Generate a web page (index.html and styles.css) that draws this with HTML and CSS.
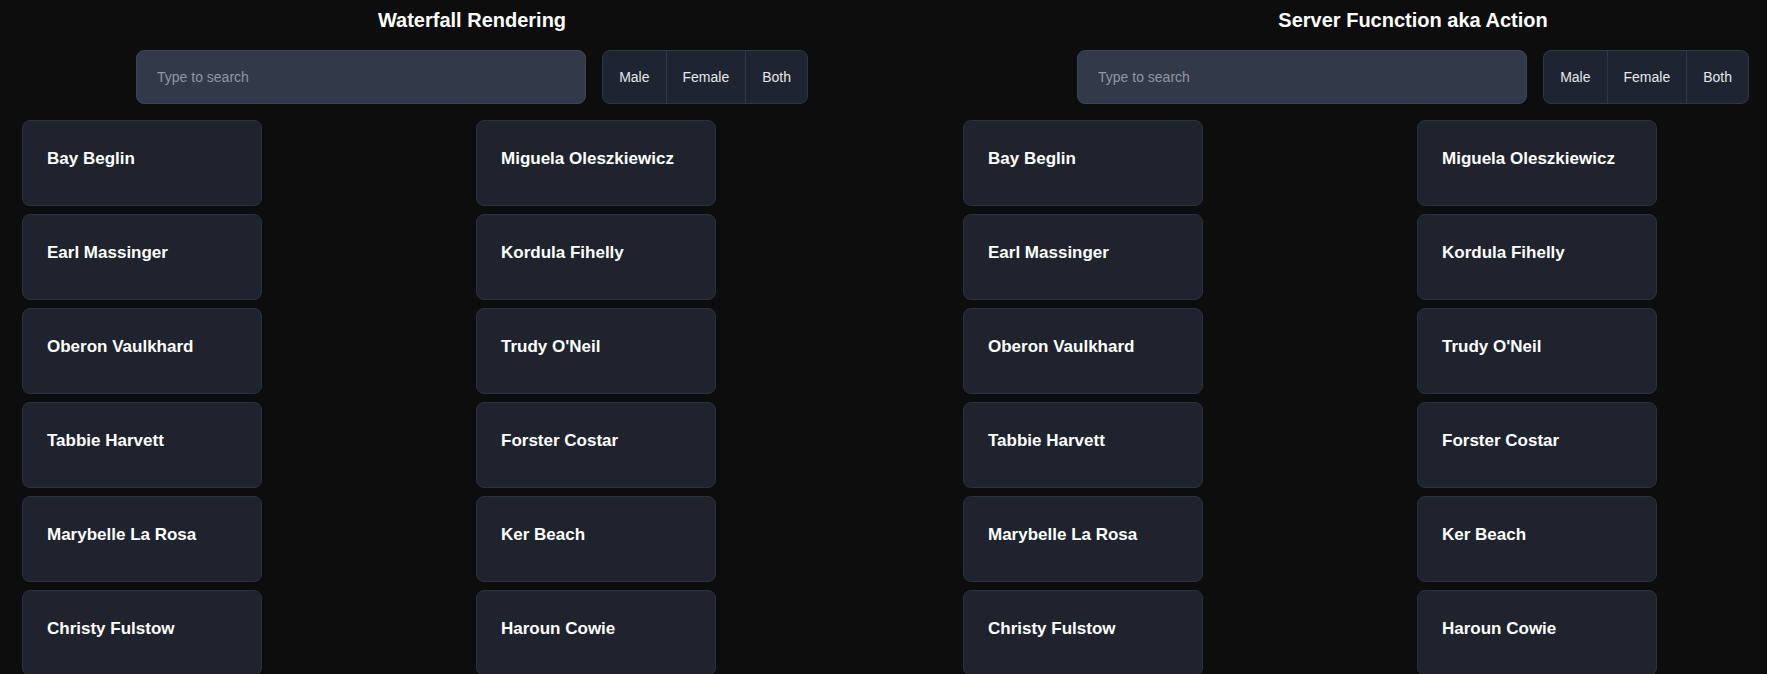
FILE: index.html
```html
<!DOCTYPE html>
<html lang="en">
<head>
<meta charset="utf-8">
<title>Waterfall vs Server Function</title>
<link rel="stylesheet" href="styles.css">
</head>
<body>
<main class="page">
  <section class="panel">
    <header class="panel-head">
      <h1 class="panel-title">Waterfall Rendering</h1>
      <div class="controls">
        <input class="search" type="text" placeholder="Type to search">
        <div class="filter">
          <button class="filter-btn" type="button">Male</button>
          <button class="filter-btn" type="button">Female</button>
          <button class="filter-btn" type="button">Both</button>
        </div>
      </div>
    </header>
    <div class="cards">
      <div class="card"><h2 class="card-name">Bay Beglin</h2></div>
      <div class="card"><h2 class="card-name">Miguela Oleszkiewicz</h2></div>
      <div class="card"><h2 class="card-name">Earl Massinger</h2></div>
      <div class="card"><h2 class="card-name">Kordula Fihelly</h2></div>
      <div class="card"><h2 class="card-name">Oberon Vaulkhard</h2></div>
      <div class="card"><h2 class="card-name">Trudy O'Neil</h2></div>
      <div class="card"><h2 class="card-name">Tabbie Harvett</h2></div>
      <div class="card"><h2 class="card-name">Forster Costar</h2></div>
      <div class="card"><h2 class="card-name">Marybelle La Rosa</h2></div>
      <div class="card"><h2 class="card-name">Ker Beach</h2></div>
      <div class="card"><h2 class="card-name">Christy Fulstow</h2></div>
      <div class="card"><h2 class="card-name">Haroun Cowie</h2></div>
    </div>
  </section>
  <section class="panel">
    <header class="panel-head">
      <h1 class="panel-title">Server Fucnction aka Action</h1>
      <div class="controls">
        <input class="search" type="text" placeholder="Type to search">
        <div class="filter">
          <button class="filter-btn" type="button">Male</button>
          <button class="filter-btn" type="button">Female</button>
          <button class="filter-btn" type="button">Both</button>
        </div>
      </div>
    </header>
    <div class="cards">
      <div class="card"><h2 class="card-name">Bay Beglin</h2></div>
      <div class="card"><h2 class="card-name">Miguela Oleszkiewicz</h2></div>
      <div class="card"><h2 class="card-name">Earl Massinger</h2></div>
      <div class="card"><h2 class="card-name">Kordula Fihelly</h2></div>
      <div class="card"><h2 class="card-name">Oberon Vaulkhard</h2></div>
      <div class="card"><h2 class="card-name">Trudy O'Neil</h2></div>
      <div class="card"><h2 class="card-name">Tabbie Harvett</h2></div>
      <div class="card"><h2 class="card-name">Forster Costar</h2></div>
      <div class="card"><h2 class="card-name">Marybelle La Rosa</h2></div>
      <div class="card"><h2 class="card-name">Ker Beach</h2></div>
      <div class="card"><h2 class="card-name">Christy Fulstow</h2></div>
      <div class="card"><h2 class="card-name">Haroun Cowie</h2></div>
    </div>
  </section>
</main>
</body>
</html>
```

FILE: styles.css
```css
html, body {
  margin: 0;
  padding: 0;
  overflow: hidden;
  background: #0d0d0d;
}

body {
  font-family: "Liberation Sans", Arial, Helvetica, sans-serif;
  color: #ffffff;
}

.page {
  display: flex;
  width: 100%;
}

.panel {
  flex: 0 0 941px;
  padding-top: 6px;
  box-sizing: border-box;
}

.panel + .panel {
  flex: 1 1 auto;
  min-width: 0;
}

.panel-head {
  width: 672px;
  margin-left: 136px;
}

.panel-title {
  margin: 0 0 16px;
  font-size: 20px;
  line-height: 28px;
  font-weight: 700;
  color: #ffffff;
  text-align: center;
  white-space: nowrap;
}

.controls {
  display: flex;
  gap: 16px;
  align-items: stretch;
}

.search {
  flex: 1 1 auto;
  min-width: 0;
  height: 54px;
  box-sizing: border-box;
  padding: 0 20px;
  border: 1px solid #3b4555;
  border-radius: 8px;
  background: #323a49;
  color: #f3f4f6;
  font-family: "Liberation Sans", Arial, Helvetica, sans-serif;
  font-size: 14px;
  line-height: 20px;
  outline: none;
}

.search::placeholder {
  color: #8f97a4;
}

.filter {
  display: flex;
  border: 1px solid #2f3846;
  border-radius: 8px;
  background: #1e2430;
  overflow: hidden;
}

.filter-btn {
  padding: 0 16px;
  margin: 0;
  border: 0;
  background: transparent;
  color: #e5e7eb;
  font-family: "Liberation Sans", Arial, Helvetica, sans-serif;
  font-size: 14px;
  line-height: 20px;
  cursor: pointer;
}

.filter-btn + .filter-btn {
  border-left: 1px solid #2f3846;
}

.cards {
  margin-top: 16px;
  padding-left: 22px;
  display: grid;
  grid-template-columns: repeat(2, 240px);
  column-gap: 214px;
  row-gap: 8px;
}

.card {
  box-sizing: border-box;
  padding: 24px 24px 32px;
  border: 1px solid #2b323e;
  border-radius: 8px;
  background: #1e232e;
}

.card-name {
  margin: 0;
  font-size: 17px;
  line-height: 28px;
  font-weight: 700;
  color: #ffffff;
  white-space: nowrap;
}
```
